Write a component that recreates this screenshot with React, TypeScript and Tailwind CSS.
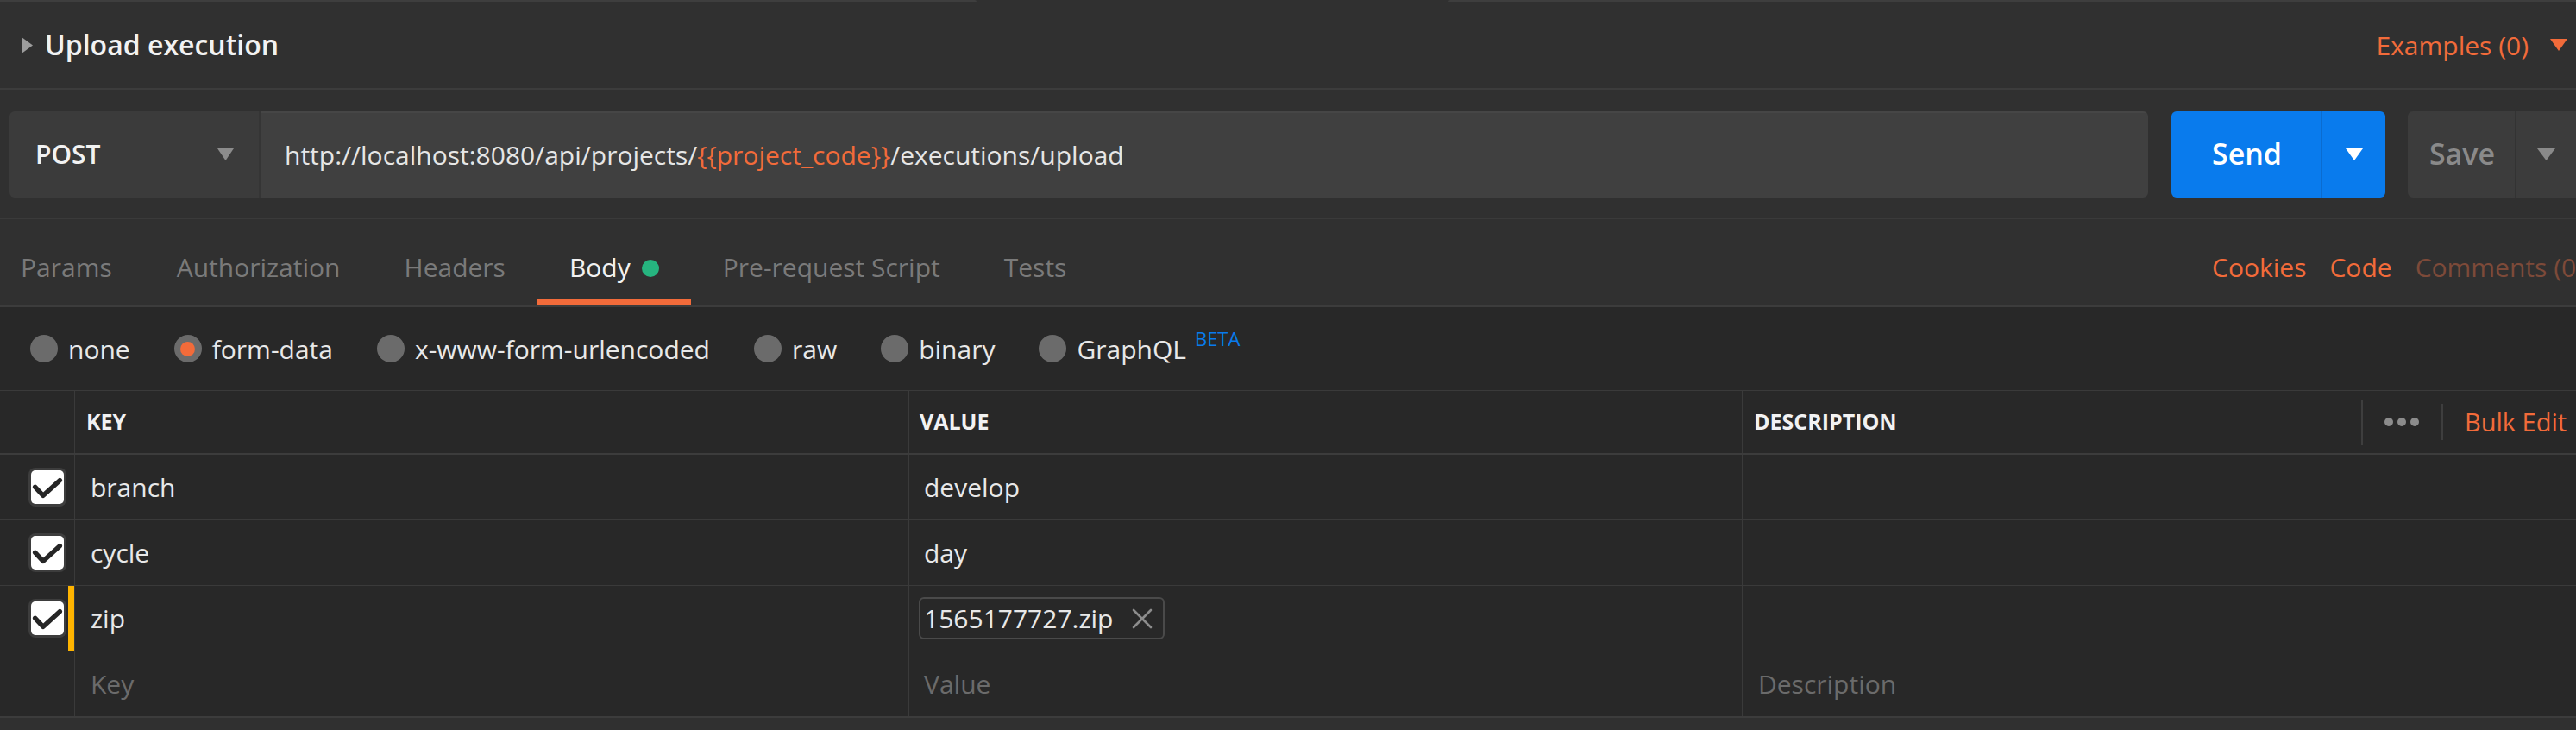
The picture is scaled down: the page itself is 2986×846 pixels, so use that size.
import React from "react";

function Caret({ color, w = 20, h = 13 }: { color: string; w?: number; h?: number }) {
  return (
    <svg width={w} height={h} viewBox={`0 0 ${w} ${h}`} className="block">
      <polygon points={`0,0 ${w},0 ${w / 2},${h}`} fill={color} />
    </svg>
  );
}

function Check() {
  return (
    <div className="w-[44px] h-[45px] rounded-[8px] bg-[#3d3d3d] p-[3px] ml-[33px]">
      <div className="w-full h-full rounded-[5px] bg-white">
        <svg width="38" height="39" viewBox="0 0 38 39" className="block">
          <polyline
            points="4.7,19.3 14,29.3 33.3,11.7"
            fill="none"
            stroke="#262626"
            strokeWidth="5.5"
            strokeLinecap="round"
            strokeLinejoin="round"
          />
        </svg>
      </div>
    </div>
  );
}

function Radio({ label, selected }: { label: string; selected?: boolean }) {
  return (
    <div className="flex items-center gap-[12px]">
      <div className="w-[32px] h-[32px] rounded-full bg-[#6b6b6b] flex items-center justify-center">
        {selected && <div className="w-[17px] h-[17px] rounded-full bg-[#f26b3a]" />}
      </div>
      <span className="text-[30px] text-[#e8e8e8]">{label}</span>
    </div>
  );
}

type Row = { key: string; value: string; file?: boolean; marker?: boolean };

const rows: Row[] = [
  { key: "branch", value: "develop" },
  { key: "cycle", value: "day" },
  { key: "zip", value: "1565177727.zip", file: true, marker: true },
];

const tabs = [
  { t: "Params" },
  { t: "Authorization" },
  { t: "Headers" },
  { t: "Body", active: true },
  { t: "Pre-request Script" },
  { t: "Tests" },
];

export default function App() {
  return (
    <div className="w-[2986px] h-[846px] overflow-hidden bg-[#303030] font-['Open_Sans',sans-serif]">
      <div className="w-[2986px] flex flex-col">
        {/* top strip */}
        <div className="flex h-[2px]">
          <div className="w-[1132px] bg-[#3e3e3e] rounded-tr-[2px]" />
          <div className="w-[547px]" />
          <div className="flex-1 bg-[#3e3e3e] rounded-tl-[2px]" />
        </div>

        {/* title row */}
        <div className="h-[100px] flex items-center pl-[25px] pr-[10px]">
          <svg width="13" height="19" viewBox="0 0 13 19" className="block">
            <polygon points="0,0 13,9.5 0,19" fill="#9c9c9c" />
          </svg>
          <span className="ml-[14px] text-[32px] font-semibold text-[#f2f2f2] leading-none">Upload execution</span>
          <div className="ml-auto flex items-center">
            <span className="text-[30px] text-[#f26b3a]">Examples (0)</span>
            <div className="ml-[25px]">
              <Caret color="#f26b3a" w={20} h={14} />
            </div>
          </div>
        </div>
        <div className="h-[2px] bg-[#3c3c3c]" />

        {/* url row */}
        <div className="h-[150px] flex items-center pl-[11px] border-b border-[#3a3a3a]">
          <div className="flex-1 h-[100px] flex rounded-[6px] overflow-hidden">
            <div className="w-[289px] bg-[#3b3b3b] flex items-center pl-[30px] pr-[29px]">
              <span className="text-[30px] font-semibold text-[#f2f2f2]">POST</span>
              <div className="ml-auto">
                <Caret color="#8c8c8c" w={19} h={14} />
              </div>
            </div>
            <div className="w-[3px] bg-[#353535]" />
            <div className="flex-1 bg-[#404040] border-t-[2px] border-[#464646] flex items-center pl-[27px]">
              <span className="text-[30px] text-[#e6e6e6]">
                http://localhost:8080/api/projects/
                <span className="text-[#f26b3a]">{"{{project_code}}"}</span>
                /executions/upload
              </span>
            </div>
          </div>
          <div className="ml-[27px] w-[248px] h-[100px] rounded-[6px] bg-[#097bed] flex">
            <div className="w-[173px] flex items-center justify-center pl-[2px]">
              <span className="text-[34px] font-semibold text-white">Send</span>
            </div>
            <div className="w-[2px] bg-[#0a6cd0]" />
            <div className="flex-1 flex items-center justify-center">
              <Caret color="#ffffff" w={20} h={14} />
            </div>
          </div>
          <div className="ml-[26px] w-[195px] h-[100px] rounded-l-[6px] bg-[#3c3c3c] flex">
            <div className="w-[124px] flex items-center justify-center pl-[2px]">
              <span className="text-[34px] font-semibold text-[#8a8a8a]">Save</span>
            </div>
            <div className="w-[2px] bg-[#333333]" />
            <div className="flex-1 flex items-center justify-center">
              <Caret color="#8a8a8a" w={21} h={14} />
            </div>
          </div>
        </div>

        {/* tabs row */}
        <div className="h-[100px] flex items-stretch">
          {tabs.map((tab, i) => (
            <div key={tab.t} className="flex flex-col">
              <div
                className={`flex-1 flex items-center pt-[17px] ${i === 0 ? "pl-[24px] pr-[38px]" : "px-[37px]"}`}
              >
                <span className={`text-[30px] ${tab.active ? "text-[#f2f2f2]" : "text-[#7a7a7a]"}`}>{tab.t}</span>
                {tab.active && <div className="ml-[13px] mt-[4px] w-[20px] h-[20px] rounded-full bg-[#26b47f]" />}
              </div>
              <div className={`h-[7px] ${tab.active ? "bg-[#f26b3a]" : ""}`} />
            </div>
          ))}
          <div className="ml-auto w-[422px] overflow-hidden flex items-center gap-[27px] pt-[17px] pb-[7px] whitespace-nowrap">
            <span className="text-[30px] text-[#f26b3a]">Cookies</span>
            <span className="text-[30px] text-[#f26b3a]">Code</span>
            <span className="text-[30px] text-[#7d4a39]">Comments (0)</span>
          </div>
        </div>
        <div className="h-[2px] bg-[#3c3c3c]" />

        {/* radio row */}
        <div className="h-[97px] bg-[#282828] flex items-center pl-[35px] gap-[51px] border-b border-[#3a3a3a]">
          <Radio label="none" />
          <Radio label="form-data" selected />
          <Radio label="x-www-form-urlencoded" />
          <Radio label="raw" />
          <Radio label="binary" />
          <div className="flex items-center">
            <Radio label="GraphQL" />
            <span className="ml-[10px] text-[22px] text-[#097bed] relative top-[-12px]">BETA</span>
          </div>
        </div>

        {/* table */}
        <div className="bg-[#282828]">
          {/* header */}
          <div className="h-[74px] flex border-b-[2px] border-[#3c3c3c]">
            <div className="w-[87px] border-r border-[#3a3a3a]" />
            <div className="w-[967px] border-r border-[#3a3a3a] flex items-center pl-[13px]">
              <span className="text-[25px] font-bold text-[#f2f2f2]">KEY</span>
            </div>
            <div className="w-[966px] border-r border-[#3a3a3a] flex items-center pl-[12px]">
              <span className="text-[25px] font-bold text-[#f2f2f2]">VALUE</span>
            </div>
            <div className="flex-1 flex items-center pl-[13px]">
              <span className="text-[25px] font-bold text-[#f2f2f2]">DESCRIPTION</span>
              <div className="ml-auto w-[249px] flex items-center overflow-hidden whitespace-nowrap">
                <div className="w-[2px] h-[53px] bg-[#3e3e3e]" />
                <div className="flex gap-[5px] ml-[25px] mr-[26px]">
                  <div className="w-[10px] h-[10px] rounded-full bg-[#8c8c8c]" />
                  <div className="w-[10px] h-[10px] rounded-full bg-[#8c8c8c]" />
                  <div className="w-[10px] h-[10px] rounded-full bg-[#8c8c8c]" />
                </div>
                <div className="w-[2px] h-[42px] bg-[#3e3e3e]" />
                <span className="ml-[25px] text-[29px] text-[#f26b3a]">Bulk Edit</span>
              </div>
            </div>
          </div>

          {rows.map((r) => (
            <div key={r.key} className="h-[76px] flex border-b border-[#3a3a3a]">
              <div className="w-[87px] border-r border-[#3a3a3a] flex items-center relative">
                <Check />
                {r.marker && <div className="absolute right-0 top-0 bottom-0 w-[7px] bg-[#ffb400]" />}
              </div>
              <div className="w-[967px] border-r border-[#3a3a3a] flex items-center pl-[18px]">
                <span className="text-[30px] text-[#e8e8e8]">{r.key}</span>
              </div>
              <div className="w-[966px] border-r border-[#3a3a3a] flex items-center pl-[11px]">
                {r.file ? (
                  <div className="h-[49px] flex items-center border-[2px] border-[#4a4a4a] rounded-[6px] pl-[4px] pr-[12px]">
                    <span className="text-[30px] text-[#e8e8e8]">{r.value}</span>
                    <svg width="24" height="24" viewBox="0 0 24 24" className="ml-[22px] block">
                      <path d="M2 2 L22 22 M22 2 L2 22" stroke="#8c8c8c" strokeWidth="2.6" strokeLinecap="round" />
                    </svg>
                  </div>
                ) : (
                  <span className="text-[30px] text-[#e8e8e8] pl-[6px]">{r.value}</span>
                )}
              </div>
              <div className="flex-1" />
            </div>
          ))}

          <div className="h-[77px] flex border-b-[2px] border-[#3c3c3c]">
            <div className="w-[87px] border-r border-[#3a3a3a]" />
            <div className="w-[967px] border-r border-[#3a3a3a] flex items-center pl-[18px]">
              <span className="text-[30px] text-[#6b6b6b]">Key</span>
            </div>
            <div className="w-[966px] border-r border-[#3a3a3a] flex items-center pl-[17px]">
              <span className="text-[30px] text-[#6b6b6b]">Value</span>
            </div>
            <div className="flex-1 flex items-center pl-[18px]">
              <span className="text-[30px] text-[#6b6b6b]">Description</span>
            </div>
          </div>
        </div>
      </div>
    </div>
  );
}
